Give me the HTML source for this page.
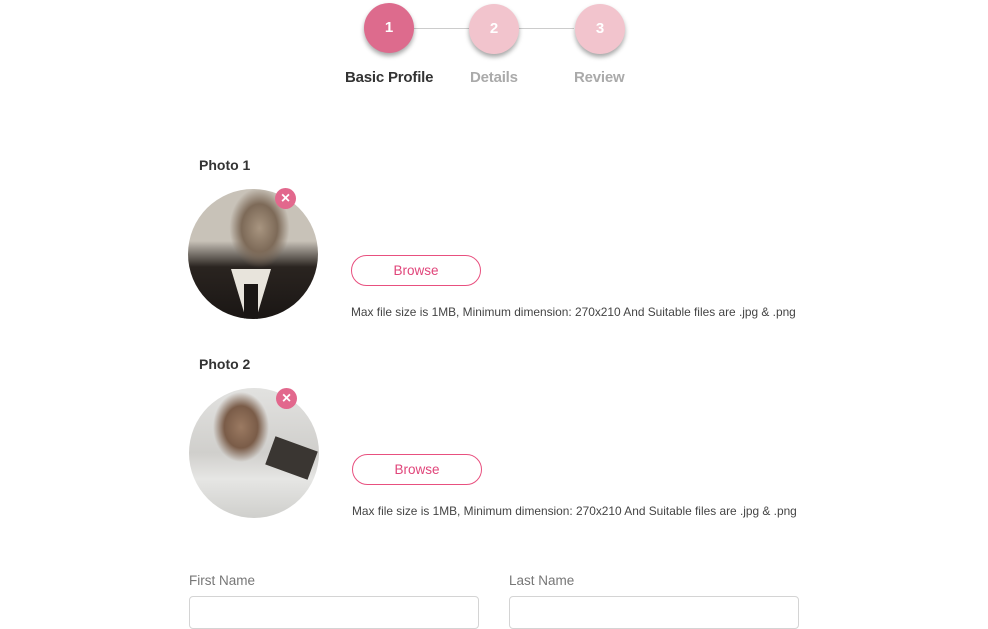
<!DOCTYPE html>
<html><head><meta charset="utf-8"><style>
*{margin:0;padding:0;box-sizing:border-box}
body{width:988px;height:629px;background:#fff;font-family:"Liberation Sans",sans-serif;position:relative;overflow:hidden}
.abs{position:absolute}
.step{position:absolute;width:50px;height:50px;border-radius:50%;color:#fff;font-weight:bold;font-size:15px;text-align:center;line-height:50px;box-shadow:0 3px 5px rgba(0,0,0,.35)}
.lab{position:absolute;font-size:15px;font-weight:bold;top:69px;letter-spacing:-0.2px}
.ph{position:absolute;border-radius:50%;overflow:hidden;width:130px;height:130px}
.x{position:absolute;width:21px;height:21px;border-radius:50%;background:#e2688d;color:#fff;font-size:16px;line-height:21px;text-align:center;font-weight:bold}
.btn{position:absolute;width:130px;height:31px;border:1.5px solid #e8507f;border-radius:16px;color:#e0457a;font-size:13.5px;text-align:center;line-height:30px}
.note{position:absolute;font-size:11.9px;color:#444}
.pl{position:absolute;font-size:14px;font-weight:bold;color:#333}
.fl{position:absolute;font-size:13.5px;color:#777;top:573px}
.in{position:absolute;top:596px;width:290px;height:33px;border:1.5px solid #d4d4d4;border-radius:4px}
</style></head><body>
<div class="abs" style="left:414px;top:28px;width:160px;height:1px;background:#ccc"></div>
<div class="step" style="left:364px;top:3px;background:#dd6b8d">1</div>
<div class="step" style="left:469px;top:4px;background:#f2c4cd">2</div>
<div class="step" style="left:575px;top:4px;background:#f2c4cd">3</div>
<div class="lab" style="left:345px;color:#333">Basic Profile</div>
<div class="lab" style="left:470px;color:#aaa">Details</div>
<div class="lab" style="left:574px;color:#aaa">Review</div>

<div class="pl" style="left:199px;top:157px">Photo 1</div>
<div class="ph" style="left:188px;top:189px;background:radial-gradient(ellipse 30px 40px at 55% 30%,#a89580 0%,#7d6a58 60%,transparent 100%),linear-gradient(180deg,#c8c2b8 0%,#c8c2b8 40%,#2a2420 60%,#1a1614 100%)">
<div class="abs" style="left:38px;top:80px;width:50px;height:50px;background:#e8e4dc;clip-path:polygon(10% 0,90% 0,60% 100%,40% 100%)"></div>
<div class="abs" style="left:56px;top:95px;width:14px;height:35px;background:#1a1614"></div>
</div>
<div class="x" style="left:275px;top:188px">×</div>
<div class="btn" style="left:351px;top:255px">Browse</div>
<div class="note" style="left:351px;top:305px">Max file size is 1MB, Minimum dimension: 270x210 And Suitable files are .jpg &amp; .png</div>

<div class="pl" style="left:199px;top:356px">Photo 2</div>
<div class="ph" style="left:189px;top:388px;background:radial-gradient(ellipse 28px 35px at 40% 30%,#9b7a62 0%,#7a5c48 60%,transparent 100%),linear-gradient(180deg,#e2e2e0 0%,#d0cfcc 50%,#e6e6e4 70%,#cfcfcc 100%)">
<div class="abs" style="left:80px;top:55px;width:45px;height:30px;background:#3a3632;transform:rotate(20deg)"></div>
</div>
<div class="x" style="left:276px;top:388px">×</div>
<div class="btn" style="left:352px;top:454px">Browse</div>
<div class="note" style="left:352px;top:504px">Max file size is 1MB, Minimum dimension: 270x210 And Suitable files are .jpg &amp; .png</div>

<div class="fl" style="left:189px">First Name</div>
<div class="fl" style="left:509px">Last Name</div>
<div class="in" style="left:189px"></div>
<div class="in" style="left:509px"></div>
</body></html>
